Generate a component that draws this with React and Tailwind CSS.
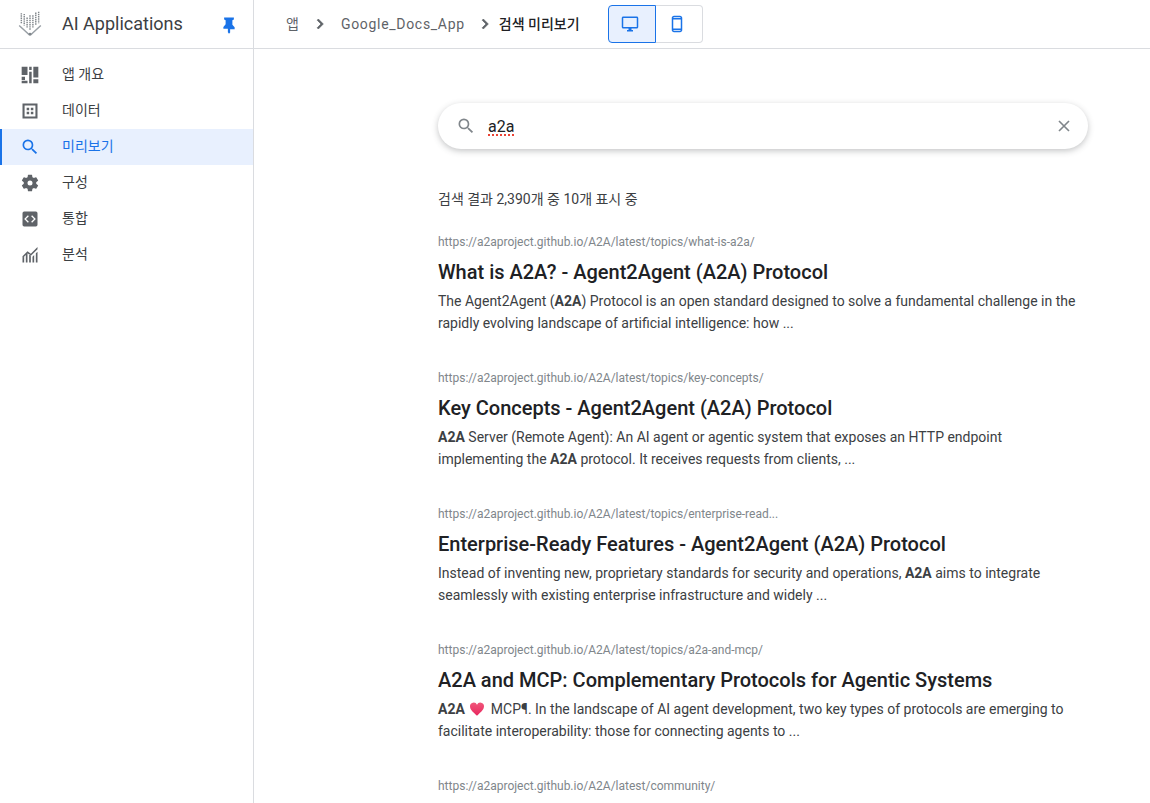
import React from 'react'

const navItems = [
  { label: '앱 개요', icon: 'dashboard' },
  { label: '데이터', icon: 'data' },
  { label: '미리보기', icon: 'search', active: true },
  { label: '구성', icon: 'gear' },
  { label: '통합', icon: 'code' },
  { label: '분석', icon: 'chart' },
]

function NavIcon({ name }) {
  const paths = {
    dashboard: 'M2 2h7v10H2zM2 14h4v4H2zM2 19h7v3H2zM11 2h3v4h-3zM11 8h3v14h-3zM16 2h6v13h-6zM16 17h6v5h-6z',
    data: 'M3 3h18v18H3zM5.500 5.500v13h13v-13zM8 8h3v3H8zM13 8h3v3h-3zM8 13h3v3H8zM13 13h3v3h-3z',
    search: 'M15.500 14h-.79l-.28-.27A6.470 6.470 0 0 0 16 9.500 6.500 6.500 0 1 0 9.500 16c1.610 0 3.090-.59 4.230-1.570l.27.28v.79l5 4.990L20.490 19l-4.990-5zm-6 0C7.010 14 5 11.990 5 9.500S7.010 5 9.500 5 14 7.010 14 9.500 11.990 14 9.500 14z',
    gear: 'M19.430 12.980c.04-.32.07-.64.07-.98s-.03-.66-.07-.98l2.110-1.650a.5.5 0 0 0 .12-.64l-2-3.460a.5.5 0 0 0-.61-.22l-2.490 1a7.300 7.300 0 0 0-1.690-.98l-.38-2.650A.49.49 0 0 0 14 2h-4a.49.49 0 0 0-.49.42l-.38 2.650c-.61.25-1.170.59-1.690.98l-2.490-1a.49.49 0 0 0-.61.22l-2 3.460a.49.49 0 0 0 .12.64l2.110 1.650c-.04.32-.07.65-.07.98s.03.66.07.98l-2.110 1.650a.5.5 0 0 0-.12.64l2 3.460c.12.22.39.3.61.22l2.490-1c.52.4 1.080.73 1.690.98l.38 2.650c.03.24.24.42.49.42h4c.25 0 .46-.18.49-.42l.38-2.650c.61-.25 1.170-.59 1.690-.98l2.490 1c.23.09.49 0 .61-.22l2-3.460a.5.5 0 0 0-.12-.64l-2.110-1.650zM12 15a3 3 0 1 1 0-6 3 3 0 0 1 0 6z',
    code: 'M5 3h14a2 2 0 0 1 2 2v14a2 2 0 0 1-2 2H5a2 2 0 0 1-2-2V5a2 2 0 0 1 2-2zm5.600 5.600L9.500 7.500 5 12l4.500 4.500 1.100-1.100L7.200 12zm2.800 0 3.400 3.400-3.400 3.400 1.100 1.100L19 12l-4.500-4.500z',
    chart: 'M3 21v-5l2-2v7zM7 21v-9l2-2v11zM11 21V11l2 1.500V21zM15 21v-7l2-2v9zM19 21V10l2-2v13zM3 13.500l6-6 4 3 8-8 .01 2.700L13 13l-4-3-6 6z',
  }
  return (
    <svg viewBox="0 0 24 24" className="w-5 h-5 fill-current" fillRule="evenodd">
      <path d={paths[name]} />
    </svg>
  )
}

function Logo() {
  const bars = [
    [6, 3, 17], [10, 4, 20], [14, 9, 24], [18, 6, 27], [22, 6, 24], [26, 2, 20], [30, 1, 17],
  ]
  return (
    <svg viewBox="0 0 36 36" className="w-[26px] h-[26px]">
      {bars.map(([x, y1, y2]) => (
        <line key={x} x1={x} y1={y1} x2={x} y2={y2} stroke="#80868b" strokeWidth="2" strokeDasharray="2 1" />
      ))}
      <path d="M3 20l14 13h2l14-13" fill="none" stroke="#9aa0a6" strokeWidth="2" />
      <circle cx="18" cy="32" r="2" fill="#80868b" />
    </svg>
  )
}

function Heart() {
  return (
    <svg viewBox="0 0 24 24" className="inline-block w-4 h-4 ml-1 mr-[6px] align-[-3px]">
      <defs>
        <linearGradient id="heartFill" x1="0" y1="0" x2="0" y2="1">
          <stop offset="0" stopColor="#f0567a" />
          <stop offset="1" stopColor="#e8265e" />
        </linearGradient>
      </defs>
      <path fill="url(#heartFill)" d="M12 22C5 16 1.500 12.500 1.500 8A5.500 5.500 0 0 1 12 5.600 5.500 5.500 0 0 1 22.500 8c0 4.500-3.500 8-10.500 14z" />
    </svg>
  )
}

function Chevron() {
  return (
    <svg viewBox="0 0 24 24" className="w-5 h-5 fill-[#5f6368] stroke-[#5f6368] stroke-[0.8]">
      <path d="M8.590 16.590 13.170 12 8.590 7.410 10 6l6 6-6 6z" />
    </svg>
  )
}

function Result({ url, title, children }) {
  return (
    <div className="h-[136px]">
      <div className="text-xs leading-4 text-[#80868b] h-4">{url}</div>
      <h3 className="mt-2 text-xl leading-7 font-medium text-[#202124]">{title}</h3>
      <p className="mt-1 text-sm leading-[22px] text-[#3c4043]">{children}</p>
    </div>
  )
}

export default function App() {
  return (
    <div className="flex h-[803px] w-[1150px] overflow-hidden bg-white font-['Roboto','Noto_Sans_CJK_KR',sans-serif]">
      {/* Sidebar */}
      <aside className="w-[254px] shrink-0 border-r border-[#dadce0]">
        <div className="flex items-center h-[49px] border-b border-[#dadce0] pl-[17px] pr-4">
          <Logo />
          <span className="ml-[19px] text-lg text-[#3c4043]">AI Applications</span>
          <svg viewBox="0 0 24 24" className="ml-auto -mr-px mt-[1px] w-[18px] h-[18px] fill-[#1a73e8]">
            <path d="M5.500 2h13v2.500l-2 1v6l3 3.500v2.500h-6v4.500L12 23.500 10.500 21.500V17h-6v-2.500l3-3.500V5.500l-2-1z" />
          </svg>
        </div>
        <nav className="pt-2">
          {navItems.map((item) => (
            <a
              key={item.label}
              href="#"
              className={
                item.active
                  ? 'flex items-center h-9 pl-[18px] bg-[#e8f0fe] text-[#1a73e8] border-l-2 border-[#1a73e8]'
                  : 'flex items-center h-9 pl-5 text-[#3c4043]'
              }
            >
              <span className={item.active ? 'text-[#1a73e8]' : 'text-[#5f6368]'}>
                <NavIcon name={item.icon} />
              </span>
              <span className="ml-[22px] mb-[2px] text-sm">{item.label}</span>
            </a>
          ))}
        </nav>
      </aside>

      <main className="flex-1 min-w-0">
        {/* Top bar */}
        <div className="flex items-center h-[49px] border-b border-[#dadce0] pl-8">
          <span className="text-sm text-[#5f6368]">앱</span>
          <span className="ml-[11px]"><Chevron /></span>
          <span className="ml-[11px] text-sm text-[#5f6368] tracking-[0.7px]">Google_Docs_App</span>
          <span className="ml-[10px]"><Chevron /></span>
          <span className="ml-1 text-sm font-medium text-[#202124]">검색 미리보기</span>
          <div className="flex ml-7 h-[38px]">
            <button className="flex items-center justify-center w-[48px] pr-1 rounded-l bg-[#e8f0fe] border border-[#1a73e8] text-[#1a73e8]">
              <svg viewBox="0 0 24 24" className="w-[18px] h-[18px] fill-current">
                <path d="M21 2H3c-1.100 0-2 .9-2 2v12c0 1.100.9 2 2 2h7v2H8v2h8v-2h-2v-2h7c1.100 0 2-.9 2-2V4c0-1.100-.9-2-2-2zm0 14H3V4h18v12z" />
              </svg>
            </button>
            <button className="flex items-center justify-center w-[47px] pr-1 rounded-r border border-l-0 border-[#dadce0] text-[#1a73e8]">
              <svg viewBox="0 0 24 24" className="w-[18px] h-[18px] fill-current">
                <path d="M16 1H8C6.340 1 5 2.340 5 4v16c0 1.660 1.340 3 3 3h8c1.660 0 3-1.340 3-3V4c0-1.660-1.340-3-3-3zm1 17H7V6h10v12zm0 2c0 .55-.45 1-1 1H8c-.55 0-1-.45-1-1h10zM7 4c0-.55.45-1 1-1h8c.55 0 1 .45 1 1H7z" />
              </svg>
            </button>
          </div>
        </div>

        <div className="pl-[184px] w-[834px]">
          {/* Search box */}
          <div className="flex items-center h-[46px] mt-[54px] rounded-full bg-white shadow-[0_2px_6px_rgba(60,64,67,0.3)] pl-[18px] pr-[14px]">
            <svg viewBox="0 0 24 24" className="w-5 h-5 fill-[#80868b]">
              <path d="M15.500 14h-.79l-.28-.27A6.470 6.470 0 0 0 16 9.500 6.500 6.500 0 1 0 9.500 16c1.610 0 3.090-.59 4.230-1.570l.27.28v.79l5 4.990L20.490 19l-4.990-5zm-6 0C7.010 14 5 11.990 5 9.500S7.010 5 9.500 5 14 7.010 14 9.500 11.990 14 9.500 14z" />
            </svg>
            <span className="ml-[12px] mt-[2px] text-base text-[#202124] underline decoration-dotted decoration-[#ea4335] decoration-2 underline-offset-2">a2a</span>
            <svg viewBox="0 0 24 24" className="ml-auto w-5 h-5 stroke-[#80868b] stroke-2 fill-none">
              <path d="M6 6l12 12M18 6L6 18" />
            </svg>
          </div>

          <p className="mt-10 text-sm leading-5 text-[#3c4043]">검색 결과 2,390개 중 10개 표시 중</p>

          <div className="mt-[25px]">
            <Result url="https://a2aproject.github.io/A2A/latest/topics/what-is-a2a/" title="What is A2A? - Agent2Agent (A2A) Protocol">
              The Agent2Agent (<b>A2A</b>) Protocol is an open standard designed to solve a fundamental challenge in the rapidly evolving landscape of artificial intelligence: how ...
            </Result>
            <Result url="https://a2aproject.github.io/A2A/latest/topics/key-concepts/" title="Key Concepts - Agent2Agent (A2A) Protocol">
              <b>A2A</b> Server (Remote Agent): An AI agent or agentic system that exposes an HTTP endpoint implementing the <b>A2A</b> protocol. It receives requests from clients, ...
            </Result>
            <Result url="https://a2aproject.github.io/A2A/latest/topics/enterprise-read..." title="Enterprise-Ready Features - Agent2Agent (A2A) Protocol">
              Instead of inventing new, proprietary standards for security and operations, <b>A2A</b> aims to integrate seamlessly with existing enterprise infrastructure and widely ...
            </Result>
            <Result url="https://a2aproject.github.io/A2A/latest/topics/a2a-and-mcp/" title="A2A and MCP: Complementary Protocols for Agentic Systems">
              <b>A2A</b><Heart />MCP¶. In the landscape of AI agent development, two key types of protocols are emerging to facilitate interoperability: those for connecting agents to ...
            </Result>
            <div className="text-xs leading-4 text-[#80868b] h-4">https://a2aproject.github.io/A2A/latest/community/</div>
          </div>
        </div>
      </main>
    </div>
  )
}
